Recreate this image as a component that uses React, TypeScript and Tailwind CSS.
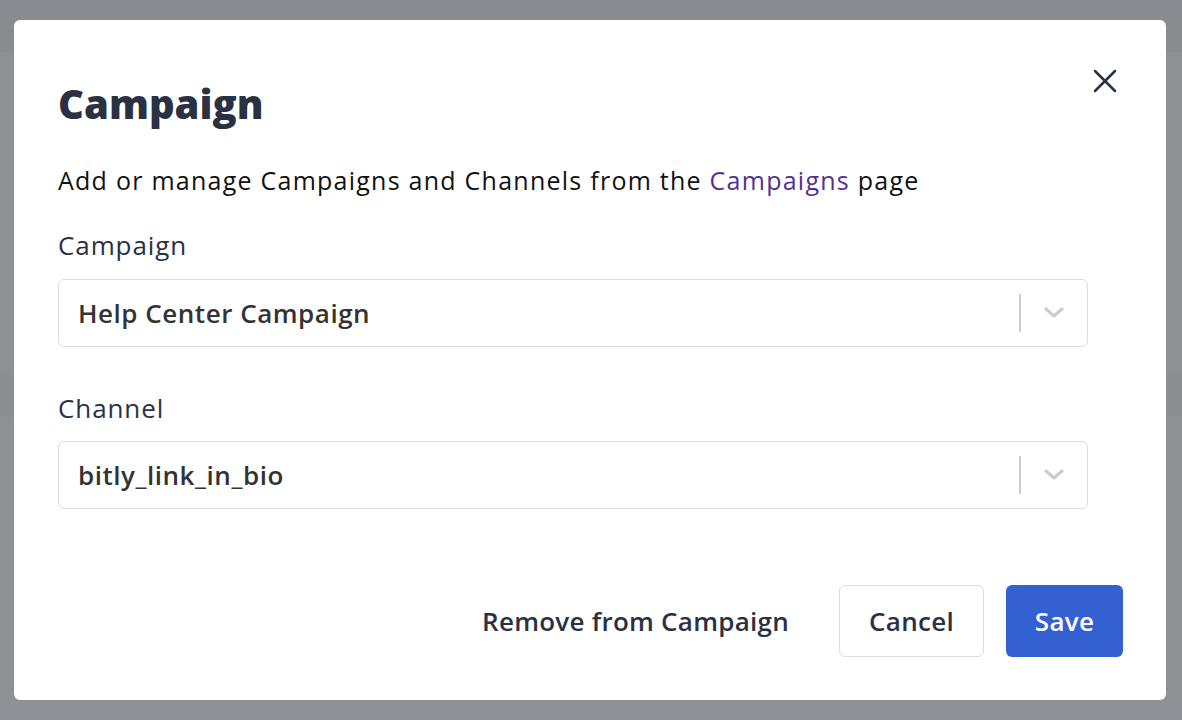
function SelectBox({ value }: { value: string }) {
  return (
    <div className="flex h-[68px] w-[1030px] items-center rounded-md border border-[#dcdde6] bg-white pl-[19px]">
      <span className="flex-1 text-[26px] font-semibold tracking-[0.02em] text-[#333333]">{value}</span>
      <span className="h-[38px] w-[2px] bg-[#cccccc]" />
      <span className="flex w-[66px] justify-center">
        <svg width="22" height="14" viewBox="0 0 22 14" fill="none">
          <path d="M3 3l8 7 8-7" stroke="#cccccc" strokeWidth="3.2" strokeLinecap="round" strokeLinejoin="round" />
        </svg>
      </span>
    </div>
  );
}

export default function App() {
  return (
    <div
      className="relative h-[720px] w-[1182px] overflow-hidden bg-[#8f9095]"
      style={{ fontFamily: '"Open Sans", "Noto Sans", sans-serif' }}
    >
      {/* page behind the overlay */}
      <div className="absolute inset-x-0 top-0 h-[52px] bg-[#898b90]" />
      <div className="absolute inset-x-0 top-[372px] h-[46px] bg-[#8c8e92]" />

      <div className="absolute left-[14px] top-[20px] h-[680px] w-[1152px] rounded-md bg-white pl-[44px] pr-[43px] pt-[60px]">
        <button className="absolute right-[49px] top-[49px]">
          <svg width="24" height="24" viewBox="0 0 24 24" fill="none">
            <path d="M2 2l20 20M22 2L2 22" stroke="#2a3142" strokeWidth="2.5" strokeLinecap="round" />
          </svg>
        </button>

        <h1 className="text-[40px] font-extrabold leading-[48px] text-[#2a3142]">Campaign</h1>
        <p className="mt-[35px] text-[25px] leading-[34px] tracking-[0.05em] text-[#111111]">
          Add or manage Campaigns and Channels from the{" "}
          <span className="text-[#56308f]">Campaigns</span> page
        </p>

        <div className="mt-[31px] text-[26px] font-medium leading-[34px] tracking-[0.035em] text-[#2a3142]">Campaign</div>
        <div className="mt-[17px]">
          <SelectBox value="Help Center Campaign" />
        </div>

        <div className="mt-[44px] text-[26px] font-medium leading-[34px] tracking-[0.035em] text-[#2a3142]">Channel</div>
        <div className="mt-[16px]">
          <SelectBox value="bitly_link_in_bio" />
        </div>

        <div className="mt-[76px] flex items-center justify-end gap-[22px]">
          <button className="mr-[28px] text-[26px] font-semibold tracking-[0.01em] text-[#2a3142]">Remove from Campaign</button>
          <button className="h-[72px] w-[145px] rounded-md border border-[#dcdde6] text-[26px] font-semibold tracking-[0.01em] text-[#2a3142]">
            Cancel
          </button>
          <button className="h-[72px] w-[117px] rounded-md bg-[#3461d1] text-[26px] font-semibold tracking-[0.01em] text-white">
            Save
          </button>
        </div>
      </div>
    </div>
  );
}
